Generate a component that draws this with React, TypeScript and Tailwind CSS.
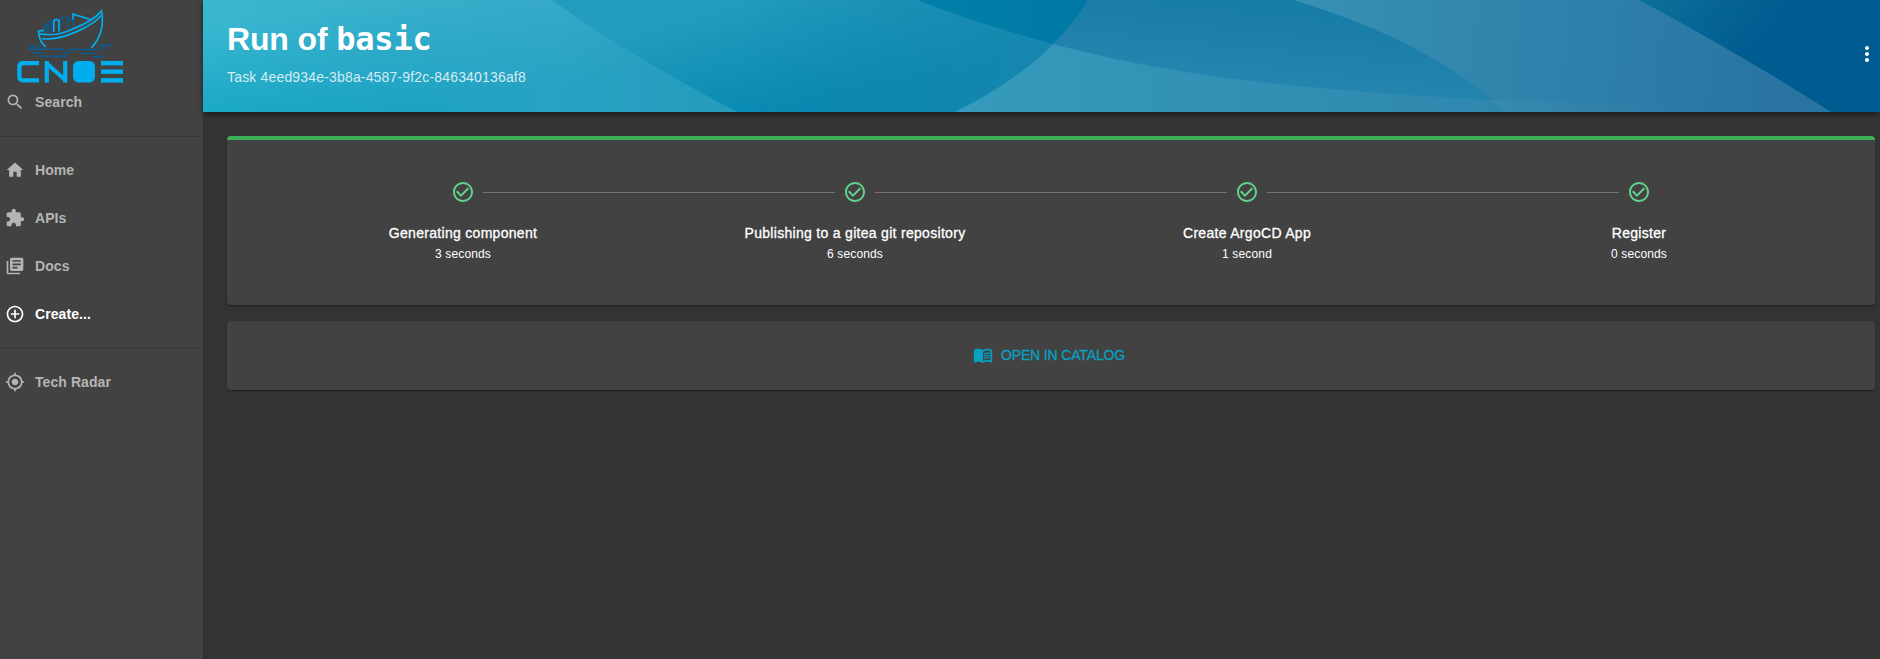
import type { ReactNode } from "react";
import {
  MdAddCircleOutline,
  MdCheckCircleOutline,
  MdExtension,
  MdHome,
  MdLibraryBooks,
  MdMenuBook,
  MdMoreVert,
  MdMyLocation,
  MdSearch,
} from "react-icons/md";

function Logo() {
  return (
    <svg width="140" height="84" viewBox="0 -0.4 140 84" fill="none" aria-label="CNOE">
      <g stroke="#0a5c94" strokeWidth="1.5">
        <path d="M44.7 32V24.5L47.5 23.5V31.5M48.3 31V21.5L51.5 20.5V31M60.3 30V18.5L64.5 17L68 18V29M68.3 20L73 18.5V27" />
        <path d="M28 46H41M28 48.8H65M98 44.8H112M68 49.2H99M101 47.7H107M32 52.5H44M62 52.5H70M81 53H94M40 55.9H67M92 56H104" />
      </g>
      <g stroke="#00adee" strokeWidth="1.7">
        <path d="M53.8 31.5V20.5Q56.5 17.5 59 20.5V31" />
        <path d="M73 19V13.8L90 18.8" />
        <path d="M44 30L38.5 30.8Q39 41.5 46 46.5" />
        <path d="M39 33.5Q56 36.5 73 28.5Q93 20.5 101.5 10.7Q105.5 32 91.5 47.5" />
        <path d="M42 38.3Q57 40 76 31.5Q95 23 101 15" />
      </g>
      <g stroke="#00adee" strokeWidth="4.2">
        <path d="M39 62.8H23Q19.4 62.8 19.4 66.4V76.4Q19.4 80 23 80H39" />
        <path d="M46.8 82V60.7M65.2 60.7V82" />
        <path d="M46 62.3L66 80.3" />
      </g>
      <rect x="73" y="60.5" width="22" height="21.7" rx="5.5" fill="#00adee" />
      <g fill="#00adee">
        <rect x="101" y="60.5" width="22" height="4.5" />
        <rect x="101" y="69" width="22" height="4.5" />
        <rect x="101" y="77.7" width="22" height="4.5" />
      </g>
    </svg>
  );
}

function NavItem({ icon, label, active }: { icon: ReactNode; label: string; active?: boolean }) {
  return (
    <a
      className={`flex h-12 items-center gap-[10px] pl-[5px] text-[14px] font-bold tracking-[0.08px] ${
        active ? "text-white" : "text-[#b5b5b5]"
      }`}
    >
      <span className="text-[20px]">{icon}</span>
      {label}
    </a>
  );
}

function Divider() {
  return <hr className="mt-[10px] mb-[9px] h-px border-0 bg-[#383838]" />;
}

function HeaderWaves() {
  return (
    <svg
      className="absolute inset-0 h-full w-full"
      viewBox="203 0 1677 112"
      preserveAspectRatio="none"
      aria-hidden="true"
    >
      <defs>
        <linearGradient id="base" gradientUnits="userSpaceOnUse" x1="900" y1="0" x2="1100" y2="0">
          <stop offset="0" stopColor="#0082aa" />
          <stop offset="1" stopColor="#0077a4" />
        </linearGradient>
        <linearGradient id="a" gradientUnits="userSpaceOnUse" x1="380" y1="-5" x2="400" y2="112">
          <stop offset="0" stopColor="#39b7d0" />
          <stop offset="1" stopColor="#0fa3c3" />
        </linearGradient>
        <linearGradient id="aTint" gradientUnits="userSpaceOnUse" x1="203" y1="0" x2="740" y2="0">
          <stop offset="0" stopColor="#3f9ec0" stopOpacity="0" />
          <stop offset="0.65" stopColor="#40a2c3" stopOpacity="0.5" />
          <stop offset="1" stopColor="#2c96b8" stopOpacity="0.75" />
        </linearGradient>
        <linearGradient id="b" gradientUnits="userSpaceOnUse" x1="790" y1="-20" x2="830" y2="112">
          <stop offset="0" stopColor="#249cbf" />
          <stop offset="0.8" stopColor="#0a8bb3" />
          <stop offset="1" stopColor="#0687b0" />
        </linearGradient>
        <linearGradient id="bTint" gradientUnits="userSpaceOnUse" x1="740" y1="0" x2="1050" y2="0">
          <stop offset="0" stopColor="#2385ad" stopOpacity="0" />
          <stop offset="1" stopColor="#2385ad" stopOpacity="0.55" />
        </linearGradient>
        <linearGradient id="c" gradientUnits="userSpaceOnUse" x1="1200" y1="0" x2="1190" y2="100">
          <stop offset="0" stopColor="#187ca8" />
          <stop offset="1" stopColor="#2888b0" />
        </linearGradient>
        <linearGradient id="d" gradientUnits="userSpaceOnUse" x1="960" y1="0" x2="1500" y2="0">
          <stop offset="0" stopColor="#359abb" />
          <stop offset="1" stopColor="#2f87ae" />
        </linearGradient>
        <linearGradient id="e" gradientUnits="userSpaceOnUse" x1="1300" y1="0" x2="1800" y2="60">
          <stop offset="0" stopColor="#3891b4" />
          <stop offset="0.5" stopColor="#2e82ab" />
          <stop offset="1" stopColor="#2973a1" />
        </linearGradient>
        <linearGradient id="f" gradientUnits="userSpaceOnUse" x1="1650" y1="-20" x2="1750" y2="60">
          <stop offset="0" stopColor="#0e709b" />
          <stop offset="1" stopColor="#005b90" />
        </linearGradient>
        <linearGradient id="g" gradientUnits="userSpaceOnUse" x1="1490" y1="0" x2="1700" y2="0">
          <stop offset="0" stopColor="#ffffff" stopOpacity="0.04" />
          <stop offset="1" stopColor="#ffffff" stopOpacity="0" />
        </linearGradient>
      </defs>
      <rect x="203" y="0" width="1677" height="112" fill="url(#base)" />
      <path d="M203 0H552Q641 62 738 112H203Z" fill="url(#a)" />
      <path d="M203 0H552Q641 62 738 112H203Z" fill="url(#aTint)" />
      <path d="M552 0H917Q984 26 1053 44Q1016 82 955 112H738Q641 62 552 0Z" fill="url(#b)" />
      <path d="M552 0H917Q984 26 1053 44Q1016 82 955 112H738Q641 62 552 0Z" fill="url(#bTint)" />
      <path d="M1053 44Q1073 24 1088 0H1293Q1430 41 1505 112H955Q1016 82 1053 44Z" fill="url(#c)" />
      <path d="M1053 44Q1171 76 1320 88Q1405 96 1491 100L1505 112H955Q1016 82 1053 44Z" fill="url(#d)" />
      <path d="M1639 0H1880V112H1831Q1738 53 1639 0Z" fill="url(#f)" />
      <path d="M1293 0H1639Q1738 53 1831 112H1505Q1430 41 1293 0Z" fill="url(#e)" />
      <path d="M1491 100L1700 107L1760 112H1505Z" fill="url(#g)" />
    </svg>
  );
}

const steps = [
  { label: "Generating component", time: "3 seconds" },
  { label: "Publishing to a gitea git repository", time: "6 seconds" },
  { label: "Create ArgoCD App", time: "1 second" },
  { label: "Register", time: "0 seconds" },
];

function Stepper() {
  return (
    <ol className="flex">
      {steps.map((step, i) => (
        <li key={step.label} className="flex flex-1 flex-col items-center text-white">
          <div className="flex w-full items-center gap-2">
            <span className={`mt-px h-px flex-1 ${i > 0 ? "bg-[#757575]" : ""}`} />
            <MdCheckCircleOutline className="text-[24px] text-[#62d08a]" />
            <span className={`mt-px h-px flex-1 ${i < steps.length - 1 ? "bg-[#757575]" : ""}`} />
          </div>
          <span className="mt-[19px] text-[14px] leading-5 tracking-[0.3px] [-webkit-text-stroke:0.3px]">
            {step.label}
          </span>
          <span className="mt-px text-[12px] leading-5 tracking-[0.15px]">{step.time}</span>
        </li>
      ))}
    </ol>
  );
}

const cardShadow =
  "shadow-[0_2px_1px_-1px_rgba(0,0,0,0.2),0_1px_1px_0_rgba(0,0,0,0.14),0_1px_3px_0_rgba(0,0,0,0.12)]";

export default function App() {
  return (
    <div className="flex h-[659px] w-full overflow-hidden bg-[#333333] font-['Liberation_Sans',Arial,sans-serif]">
      <nav className="w-[203px] shrink-0 bg-[#424242]">
        <div className="h-[78px]">
          <Logo />
        </div>
        <NavItem icon={<MdSearch />} label="Search" />
        <Divider />
        <NavItem icon={<MdHome />} label="Home" />
        <NavItem icon={<MdExtension />} label="APIs" />
        <NavItem icon={<MdLibraryBooks />} label="Docs" />
        <NavItem icon={<MdAddCircleOutline />} label="Create..." active />
        <Divider />
        <NavItem icon={<MdMyLocation />} label="Tech Radar" />
      </nav>
      <main className="min-w-0 flex-1">
        <header className="relative flex h-28 items-center justify-between pr-[1px] pb-1 pl-6 shadow-[0_2px_6px_rgba(0,0,0,0.5)]">
          <HeaderWaves />
          <div className="relative pb-[3px]">
            <h1 className="text-[32px] leading-10 font-bold tracking-[-0.15px] text-white">
              Run of <code className="font-['DejaVu_Sans_Mono',monospace] text-[32px]">basic</code>
            </h1>
            <p className="mt-2 text-[14px] leading-5 tracking-[0.17px] text-[#d5edf4]">
              Task 4eed934e-3b8a-4587-9f2c-846340136af8
            </p>
          </div>
          <MdMoreVert className="relative text-[24px] text-white" />
        </header>
        <div className="flex flex-col gap-4 pt-6 pr-[5px] pl-6">
          <section className={`h-[169px] overflow-hidden rounded bg-[#424242] ${cardShadow}`}>
            <div className="h-1 bg-[#3bb257]" />
            <div className="px-10 pt-10">
              <Stepper />
            </div>
          </section>
          <section className={`flex h-[69px] items-center justify-center rounded bg-[#424242] pr-1 ${cardShadow}`}>
            <button className="flex items-center gap-2 text-[14px] tracking-[-0.15px] text-[#06a0c2] [-webkit-text-stroke:0.3px]">
              <MdMenuBook className="mb-px text-[20px]" />
              OPEN IN CATALOG
            </button>
          </section>
        </div>
      </main>
    </div>
  );
}
